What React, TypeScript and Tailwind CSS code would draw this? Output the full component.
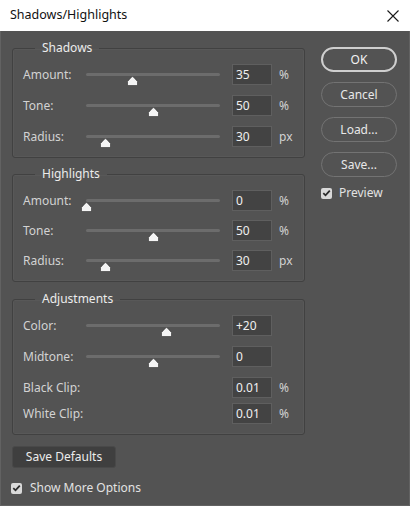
import React from 'react';

const FONT = { fontFamily: '"Noto Sans", "Open Sans", sans-serif' };

// slider track starts at x=86 and is 134px long
const TRACK_W = 134;

type Row = {
  label: string;
  value: string;
  unit?: string;
  pos?: number; // 0..1, undefined means no slider
};

const Thumb = ({ pos }: { pos: number }) => (
  <svg
    width="11"
    height="10"
    viewBox="0 0 11 10"
    className="absolute top-[12px]"
    style={{ left: pos * TRACK_W - 5.5 }}
  >
    <path d="M0.5 9.5 V5.5 L4.6 1 Q5.5 0.2 6.4 1 L10.5 5.5 V9.5 Z" fill="#f4f4f4" stroke="#2e2e2e" strokeWidth="0.6" />
  </svg>
);

const SliderRow = ({ row }: { row: Row }) => (
  <div className="flex h-[21px] items-center">
    <div className="w-[63px] shrink-0 text-[12px] text-[#d2d2d2]">{row.label}</div>
    <div className="relative h-[21px] w-[134px] shrink-0">
      {row.pos !== undefined && (
        <>
          <div className="absolute left-0 right-0 top-[9px] h-[3px] rounded-full bg-[#6c6c6c]" />
          <Thumb pos={row.pos} />
        </>
      )}
    </div>
    <div className="ml-[12px] flex h-[21px] w-[40px] shrink-0 items-center border border-[#5f5f5f] bg-[#434343] pl-[3px] text-[12px] text-[#f0f0f0]">
      {row.value}
    </div>
    <div className="ml-[7px] text-[12px] text-[#d2d2d2]">{row.unit}</div>
  </div>
);

const Group = ({
  title,
  rows,
  gaps,
}: {
  title: string;
  rows: Row[];
  gaps: number[];
}) => (
  <fieldset className="rounded-[3px] border border-[#414141] pb-[10px] pl-[10px] pt-[8px] shadow-[inset_0_0_0_1px_#585858]">
    <legend className="ml-[12px] px-[7px] text-[12px] leading-4 text-[#ececec]">{title}</legend>
    <div className="flex flex-col">
      {rows.map((r, i) => (
        <div key={r.label} style={{ marginTop: i === 0 ? 0 : gaps[i - 1] }}>
          <SliderRow row={r} />
        </div>
      ))}
    </div>
  </fieldset>
);

const Check = () => (
  <div className="flex h-[11px] w-[11px] items-center justify-center rounded-[2px] bg-[#d9d9d9]">
    <svg width="9" height="8" viewBox="0 0 9 8">
      <path d="M1.3 4.2 L3.5 6.3 L7.8 1.6" fill="none" stroke="#2b2b2b" strokeWidth="1.8" />
    </svg>
  </div>
);

const PillButton = ({ label, primary }: { label: string; primary?: boolean }) => (
  <button
    className={
      primary
        ? 'flex h-[25px] w-[76px] items-center justify-center rounded-full border-2 border-[#cfcfcf] text-[12px] text-[#f2f2f2]'
        : 'flex h-[25px] w-[76px] items-center justify-center rounded-full border border-[#737373] text-[12px] text-[#e8e8e8]'
    }
  >
    {label}
  </button>
);

export default function App() {
  const shadows: Row[] = [
    { label: 'Amount:', value: '35', unit: '%', pos: 0.35 },
    { label: 'Tone:', value: '50', unit: '%', pos: 0.5 },
    { label: 'Radius:', value: '30', unit: 'px', pos: 0.142 },
  ];
  const highlights: Row[] = [
    { label: 'Amount:', value: '0', unit: '%', pos: 0 },
    { label: 'Tone:', value: '50', unit: '%', pos: 0.5 },
    { label: 'Radius:', value: '30', unit: 'px', pos: 0.142 },
  ];
  const adjustments: Row[] = [
    { label: 'Color:', value: '+20', pos: 0.6 },
    { label: 'Midtone:', value: '0', pos: 0.5 },
    { label: 'Black Clip:', value: '0.01', unit: '%' },
    { label: 'White Clip:', value: '0.01', unit: '%' },
  ];

  return (
    <div className="flex h-[506px] w-[410px] flex-col bg-[#535353]" style={FONT}>
      {/* Title bar */}
      <div className="flex h-[31px] shrink-0 items-center justify-between bg-white pl-[10px] pr-[11px]">
        <span className="text-[12.5px] text-[#111]">Shadows/Highlights</span>
        <svg width="12" height="12" viewBox="0 0 12 12">
          <path d="M0.5 0.5 L11.5 11.5 M11.5 0.5 L0.5 11.5" stroke="#1a1a1a" strokeWidth="1.1" />
        </svg>
      </div>

      <div className="flex flex-1 border-x border-b border-[#626262]">
        {/* Left column */}
        <div className="flex w-[304px] flex-col pl-[11px] pt-[9px]">
          <Group title="Shadows" rows={shadows} gaps={[10, 10]} />
          <div className="mt-[8px]">
            <Group title="Highlights" rows={highlights} gaps={[9, 9]} />
          </div>
          <div className="mt-[9px]">
            <Group title="Adjustments" rows={adjustments} gaps={[10, 10, 5]} />
          </div>

          <button className="mt-[11px] flex h-[22px] w-[104px] items-center justify-center rounded-[3px] border border-[#494949] bg-[#3f3f3f] text-[12px] text-[#ececec]">
            Save Defaults
          </button>

          <div className="ml-[-1px] mt-[11px] flex items-center gap-[8px]">
            <Check />
            <span className="text-[12px] text-[#e2e2e2]">Show More Options</span>
          </div>
        </div>

        {/* Right column */}
        <div className="ml-[16px] flex flex-col gap-[10px] pt-[16px]">
          <PillButton label="OK" primary />
          <PillButton label="Cancel" />
          <PillButton label="Load..." />
          <PillButton label="Save..." />
          <div className="-mt-[3px] flex items-center gap-[7px]">
            <Check />
            <span className="text-[12px] text-[#e2e2e2]">Preview</span>
          </div>
        </div>
      </div>
    </div>
  );
}
